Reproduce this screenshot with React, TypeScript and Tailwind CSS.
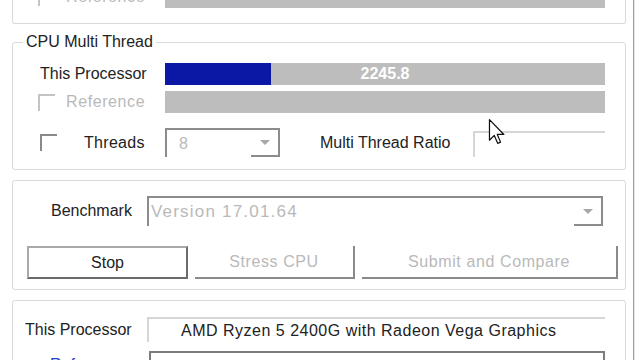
import React from "react"

const dis = "text-[#b9b9b9]"

function Check({ disabled }: { disabled?: boolean }) {
    return (
        <div
            className={`w-[17px] h-[17px] border-t-2 border-l-2 ${disabled ? "border-[#c4c4c4]" : "border-[#8a8a8a]"}`}
        />
    )
}

function Bar({ value, fill }: { value?: string; fill?: number }) {
    return (
        <div className="relative w-[440px] h-[22px] bg-[#bdbdbd] flex items-center justify-center">
            {fill !== undefined && (
                <div className="absolute left-0 top-0 bottom-0 bg-[#0b18a6]" style={{ width: `${fill}px` }} />
            )}
            {value && <span className="relative text-white font-bold text-[16px] leading-none">{value}</span>}
        </div>
    )
}

function Combo({ text, className, textClass }: { text: string; className: string; textClass: string }) {
    return (
        <div className={`flex border-t-2 border-l-2 border-r-2 border-[#8c8c8c] ${className}`}>
            <div className={`flex-1 flex items-center ${dis} ${textClass}`}>{text}</div>
            <div className="w-[27px] border-b-2 border-[#8c8c8c] flex items-center justify-center">
                <div className="w-0 h-0 border-l-[5px] border-r-[5px] border-t-[5px] border-l-transparent border-r-transparent border-t-[#a8a8a8]" />
            </div>
        </div>
    )
}

function Cursor() {
    return (
        <svg className="absolute left-[488px] top-[119px]" width="18" height="26" viewBox="0 0 12 19">
            <path d="M0.5 0.5 L0.5 15.5 L4 12 L6.5 17.8 L8.6 16.9 L6.2 11.3 L11 11.3 Z" fill="#fff" stroke="#111" strokeWidth="0.9" strokeLinejoin="round" />
        </svg>
    )
}

export default function App() {
    return (
        <div className="relative w-[640px] h-[360px] overflow-hidden bg-white flex text-[16px] text-[#222] [font-family:'Liberation_Sans',Arial,sans-serif]">
            <div className="w-[633px] pl-[12px] flex flex-col">
                {/* partially visible group (single thread) */}
                <div className="w-[614px] -mt-[20px] pt-[6px] pb-[15px] border-x border-b border-[#dadada] rounded-b-[3px] shrink-0">
                    <div className="flex items-center h-[22px]">
                        <div className="w-[152px] flex items-center pl-[25px]">
                            <Check disabled />
                            <span className={`ml-[11px] tracking-[0.6px] ${dis}`}>Reference</span>
                        </div>
                        <Bar />
                    </div>
                </div>

                {/* CPU Multi Thread */}
                <fieldset className="w-[614px] mt-[9px] border border-[#dadada] rounded-[3px] shrink-0">
                    <legend className="ml-[10px] px-[3px] leading-[18px]">CPU Multi Thread</legend>
                    <div className="pt-[12px] pb-[12px] flex flex-col">
                        <div className="flex items-center h-[22px]">
                            <div className="w-[152px] pl-[27px]">This Processor</div>
                            <Bar value="2245.8" fill={106} />
                        </div>
                        <div className="flex items-center h-[22px] mt-[6px]">
                            <div className="w-[152px] flex items-center pl-[25px]">
                                <Check disabled />
                                <span className={`ml-[11px] tracking-[0.6px] ${dis}`}>Reference</span>
                            </div>
                            <Bar />
                        </div>
                        <div className="flex items-center h-[29px] mt-[15px]">
                            <div className="w-[152px] flex items-center pl-[27px]">
                                <Check />
                                <span className="ml-[27px] tracking-[0.3px]">Threads</span>
                            </div>
                            <Combo text="8" className="w-[115px] h-[29px]" textClass="pl-[12px]" />
                            <div className="w-[153px] ml-[40px]">Multi Thread Ratio</div>
                            <div className="w-[132px] h-[26px] mt-[3px] border-t-2 border-l-2 border-[#d6d6d6]" />
                        </div>
                    </div>
                </fieldset>

                {/* Benchmark */}
                <div className="w-[614px] mt-[10px] border border-[#dadada] rounded-[3px] pt-[15px] pb-[10px] shrink-0">
                    <div className="flex items-center h-[30px]">
                        <div className="w-[134px] pl-[38px]">Benchmark</div>
                        <Combo text="Version 17.01.64" className="w-[456px] h-[30px]" textClass="pl-[2px] text-[17px] tracking-[1.2px]" />
                    </div>
                    <div className="flex h-[33px] mt-[20px] pl-[14px] gap-[7px]">
                        <button className="w-[161px] h-[33px] border-2 border-t-[#a9a9a9] border-l-[#a9a9a9] border-b-[#6a6a6a] border-r-[#6a6a6a] bg-white">
                            Stop
                        </button>
                        <button className={`w-[160px] h-[33px] border-b-2 border-r-2 border-[#8a8a8a] tracking-[0.6px] ${dis}`}>
                            Stress CPU
                        </button>
                        <button className={`w-[256px] h-[33px] border-b-2 border-r-2 border-[#8a8a8a] tracking-[0.6px] ${dis}`}>
                            Submit and Compare
                        </button>
                    </div>
                </div>

                {/* Processor names */}
                <div className="w-[614px] mt-[10px] border border-[#dadada] rounded-[3px] pt-[16px] pb-[10px] shrink-0">
                    <div className="flex items-center h-[25px]">
                        <div className="w-[134px] pl-[12px]">This Processor</div>
                        <div className="w-[458px] h-[25px] border-t-2 border-l-2 border-[#d6d6d6] flex items-center pl-[32px] tracking-[0.5px]">
                            AMD Ryzen 5 2400G with Radeon Vega Graphics
                        </div>
                    </div>
                    <div className="flex items-center h-[28px] mt-[9px]">
                        <div className="w-[136px] pl-[37px] text-[#1e3fc4]">Reference</div>
                        <div className="w-[456px] h-[28px] border-t-2 border-l-2 border-r-2 border-[#7c7c7c]" />
                    </div>
                </div>
            </div>
            <div className="w-[2px] h-full border-l border-[#9e9e9e] bg-[#e4e4e4]" />
            <Cursor />
        </div>
    )
}
